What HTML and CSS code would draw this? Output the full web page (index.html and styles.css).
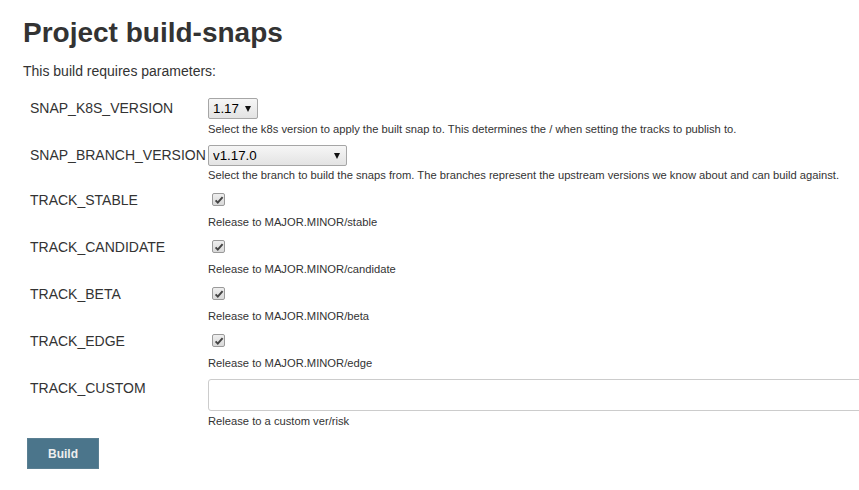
FILE: index.html
```html
<!DOCTYPE html>
<html lang="en">
<head>
<meta charset="utf-8">
<title>Project build-snaps</title>
<link rel="stylesheet" href="styles.css">
</head>
<body>
<div class="page">
  <h1 class="title">Project build-snaps</h1>
  <p class="intro">This build requires parameters:</p>
  <form class="params">
    <div class="param param-select">
      <div class="label">SNAP_K8S_VERSION</div>
      <div class="control">
        <span class="select select-short"><select><option>1.17</option></select></span>
        <div class="desc">Select the k8s version to apply the built snap to. This determines the / when setting the tracks to publish to.</div>
      </div>
    </div>
    <div class="param param-select">
      <div class="label">SNAP_BRANCH_VERSION</div>
      <div class="control">
        <span class="select select-long"><select><option>v1.17.0</option></select></span>
        <div class="desc">Select the branch to build the snaps from. The branches represent the upstream versions we know about and can build against.</div>
      </div>
    </div>
    <div class="param param-check">
      <div class="label">TRACK_STABLE</div>
      <div class="control">
        <span class="checkbox"><svg viewBox="0 0 12 12" width="12" height="12"><path d="M2.6 6.4 L4.8 8.6 L9.6 3.2" fill="none" stroke="#444" stroke-width="2"/></svg></span>
        <div class="desc">Release to MAJOR.MINOR/stable</div>
      </div>
    </div>
    <div class="param param-check">
      <div class="label">TRACK_CANDIDATE</div>
      <div class="control">
        <span class="checkbox"><svg viewBox="0 0 12 12" width="12" height="12"><path d="M2.6 6.4 L4.8 8.6 L9.6 3.2" fill="none" stroke="#444" stroke-width="2"/></svg></span>
        <div class="desc">Release to MAJOR.MINOR/candidate</div>
      </div>
    </div>
    <div class="param param-check">
      <div class="label">TRACK_BETA</div>
      <div class="control">
        <span class="checkbox"><svg viewBox="0 0 12 12" width="12" height="12"><path d="M2.6 6.4 L4.8 8.6 L9.6 3.2" fill="none" stroke="#444" stroke-width="2"/></svg></span>
        <div class="desc">Release to MAJOR.MINOR/beta</div>
      </div>
    </div>
    <div class="param param-check">
      <div class="label">TRACK_EDGE</div>
      <div class="control">
        <span class="checkbox"><svg viewBox="0 0 12 12" width="12" height="12"><path d="M2.6 6.4 L4.8 8.6 L9.6 3.2" fill="none" stroke="#444" stroke-width="2"/></svg></span>
        <div class="desc">Release to MAJOR.MINOR/edge</div>
      </div>
    </div>
    <div class="param param-text">
      <div class="label">TRACK_CUSTOM</div>
      <div class="control">
        <input class="text-input" type="text">
        <div class="desc">Release to a custom ver/risk</div>
      </div>
    </div>
    <button class="build-btn" type="button">Build</button>
  </form>
</div>
</body>
</html>
```

FILE: styles.css
```css
html, body {
  overflow: hidden;
}
body {
  margin: 0;
  font-family: "Liberation Sans", Arial, sans-serif;
  font-size: 14px;
  color: #333;
  background: #fff;
}
.page {
  padding-left: 23px;
}
.title {
  margin: 17px 0 0;
  font-size: 28px;
  line-height: 32px;
  font-weight: bold;
  color: #333;
}
.intro {
  margin: 14px 0 0;
  line-height: 16px;
}
.params {
  margin-top: 17px;
}
.param {
  display: grid;
  grid-template-columns: 178px 1fr;
  padding-left: 7px;
}
.label {
  line-height: 16px;
  white-space: nowrap;
}
.control {
  display: flex;
  flex-direction: column;
  align-items: flex-start;
}
.desc {
  font-size: 11.2px;
  line-height: 14px;
  color: #333;
  white-space: nowrap;
}

/* select rows */
.param-select {
  height: 47px;
}
.param-select .label {
  padding-top: 4px;
}
.select {
  position: relative;
  display: inline-block;
  margin-top: 2px;
}
.select select {
  appearance: none;
  -webkit-appearance: none;
  display: block;
  height: 21px;
  margin: 0;
  padding: 0 0 0 4px;
  border: 1px solid #a6a6a6;
  border-radius: 2px;
  background: linear-gradient(#f6f6f6, #e3e3e3);
  font-family: "Liberation Sans", Arial, sans-serif;
  font-size: 13.333px;
  color: #000;
}
.select::after {
  content: "";
  position: absolute;
  right: 7px;
  top: 8px;
  border-left: 3.5px solid transparent;
  border-right: 3.5px solid transparent;
  border-top: 6px solid #111;
  pointer-events: none;
}
.select-short select {
  width: 50px;
}
.select-long select {
  width: 139px;
}
.param-select .desc {
  margin-top: 3px;
}
.param-select + .param-select .desc {
  margin-top: 2px;
}

/* checkbox rows */
.param-check {
  height: 47px;
}
.param-check .label {
  padding-top: 2px;
}
.checkbox {
  box-sizing: border-box;
  display: block;
  width: 13px;
  height: 13px;
  margin: 3px 0 0 4px;
  border: 1px solid #9a9a9a;
  border-radius: 2px;
  background: linear-gradient(#eeeeee, #d9d9d9);
}
.checkbox svg {
  display: block;
  margin: -0.5px 0 0 -0.5px;
}
.param-check .desc {
  margin-top: 9px;
}

/* text row */
.param-text {
  margin-top: -1px;
}
.param-text .label {
  padding-top: 3px;
}
.text-input {
  box-sizing: border-box;
  width: 720px;
  height: 32px;
  margin: 2px 0 0;
  border: 1px solid #cccccc;
  border-radius: 3px;
  background: #fff;
  font-family: "Liberation Sans", Arial, sans-serif;
  font-size: 14px;
}
.param-text .desc {
  margin-top: 3px;
}

.build-btn {
  display: block;
  margin: 10px 0 0 4px;
  width: 72px;
  height: 31px;
  padding: 0;
  border: 1px solid #5a7f92;
  border-radius: 0;
  background: #4b758b;
  color: #eeeeee;
  font-family: "Liberation Sans", Arial, sans-serif;
  font-size: 12px;
  font-weight: bold;
}
```
